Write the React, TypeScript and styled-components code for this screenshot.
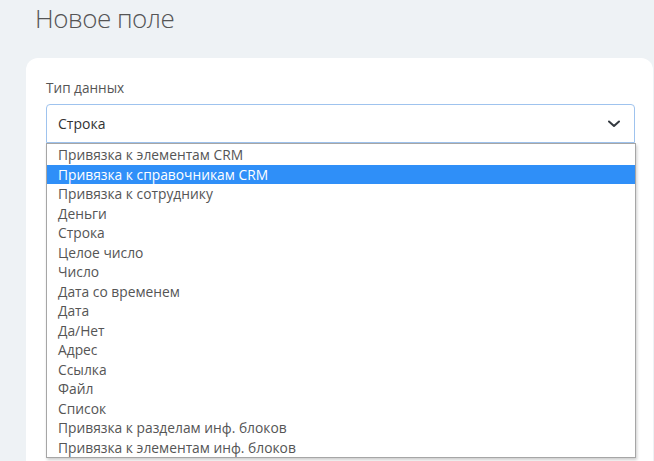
import React from 'react';
import styled, { createGlobalStyle } from 'styled-components';

const GlobalStyle = createGlobalStyle`
  html, body {
    margin: 0;
    padding: 0;
    background: #eef2f5;
    font-family: "Open Sans", "Noto Sans", sans-serif;
  }
`;

const Page = styled.div`
  width: 654px;
  height: 461px;
  overflow: hidden;
  display: flex;
  flex-direction: column;
`;

const Title = styled.h1`
  margin: 0;
  padding: 0 0 0 35px;
  height: 58px;
  font-size: 26px;
  font-weight: 300;
  letter-spacing: -0.5px;
  color: #555;
  line-height: 36px;
  box-sizing: border-box;
`;

const Card = styled.div`
  margin-left: 26px;
  width: 627px;
  flex: 1;
  background: #fff;
  border-radius: 12px 12px 0 0;
  padding: 20px 18px 0 20px;
  box-sizing: border-box;
`;

const Label = styled.div`
  font-size: 13.6px;
  color: #555;
  line-height: 20px;
  margin-bottom: 6px;
`;

const Field = styled.div`
  position: relative;
`;

const SelectBox = styled.div`
  height: 39px;
  box-sizing: border-box;
  border: 1px solid #9fc3ee;
  border-radius: 4px 4px 0 0;
  display: flex;
  align-items: center;
  justify-content: space-between;
  padding: 0 14px 0 11px;
  font-size: 14px;
  color: #333;
`;

const Chevron = styled.svg`
  width: 12px;
  height: 8px;
`;

const List = styled.ul`
  list-style: none;
  margin: 0;
  padding: 1px 0 0;
  position: absolute;
  left: 0;
  top: 39px;
  width: 590px;
  box-sizing: border-box;
  background: #fff;
  border: 1px solid #a6a6a6;
  box-shadow: 1px 2px 3px rgba(0, 0, 0, 0.2);
`;

const Item = styled.li<{ $active?: boolean }>`
  height: 19.5px;
  line-height: 19.5px;
  padding-left: 11px;
  font-size: 13.8px;
  white-space: nowrap;
  color: ${p => (p.$active ? '#fff' : '#555')};
  background: ${p => (p.$active ? '#2f8ff8' : 'transparent')};
`;

const options = [
  'Привязка к элементам CRM',
  'Привязка к справочникам CRM',
  'Привязка к сотруднику',
  'Деньги',
  'Строка',
  'Целое число',
  'Число',
  'Дата со временем',
  'Дата',
  'Да/Нет',
  'Адрес',
  'Ссылка',
  'Файл',
  'Список',
  'Привязка к разделам инф. блоков',
  'Привязка к элементам инф. блоков',
];

export default function App() {
  return (
    <Page>
      <GlobalStyle />
      <Title>Новое поле</Title>
      <Card>
        <Label>Тип данных</Label>
        <Field>
          <SelectBox>
            <span>Строка</span>
            <Chevron viewBox="0 0 12 8">
              <path d="M1 1.5 L6 6 L11 1.5" fill="none" stroke="#343a40" strokeWidth="2" strokeLinecap="round" strokeLinejoin="round" />
            </Chevron>
          </SelectBox>
          <List>
            {options.map((o, i) => (
              <Item key={o} $active={i === 1}>{o}</Item>
            ))}
          </List>
        </Field>
      </Card>
    </Page>
  );
}
